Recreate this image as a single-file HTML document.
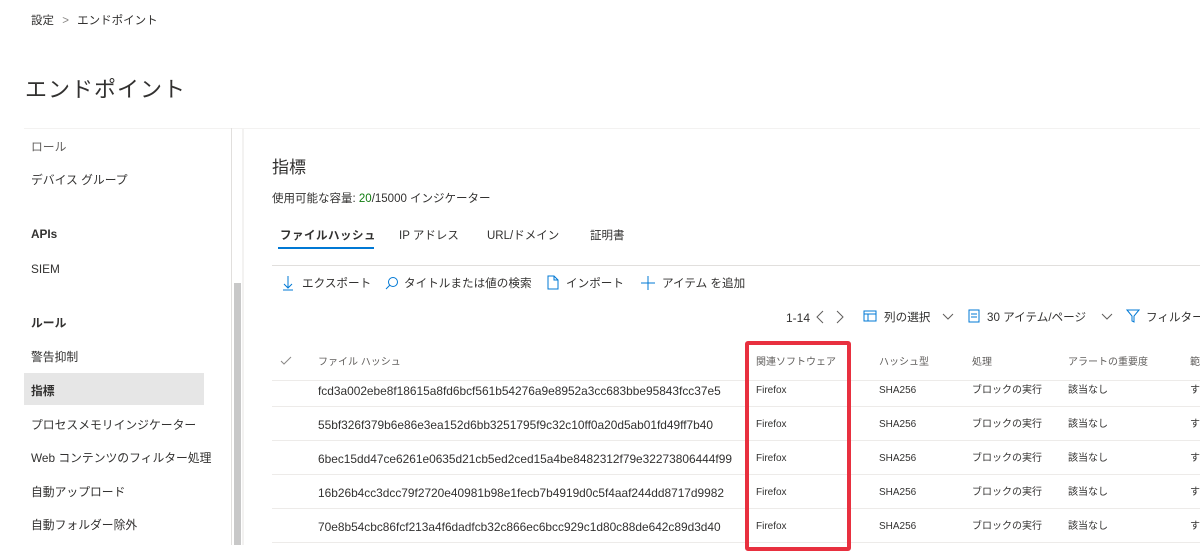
<!DOCTYPE html>
<html><head><meta charset="utf-8"><style>
*{margin:0;padding:0;box-sizing:border-box}
body{width:1200px;height:545px;overflow:hidden;background:#fff;font-family:"Liberation Sans","Noto Sans CJK JP",sans-serif;color:#323130;position:relative}
.a{position:absolute;white-space:nowrap;line-height:16px;padding-top:2px}
.s{font-size:11.8px;color:#323130;left:31px}
.c{font-size:10px;color:#323130}
.hx{font-size:11.9px}
.h{font-size:10px;color:#605e5c}
.ln{position:absolute;height:1px;background:#edebe9}
svg{position:absolute}
</style></head><body>
<div class="a" style="left:31px;top:11px;font-size:11.5px">設定 <span style="color:#8a8886;margin:0 5px">&gt;</span> エンドポイント</div>
<div class="a" style="left:25px;top:72px;font-size:22px;line-height:32px;letter-spacing:1px;color:#323130">エンドポイント</div>
<div class="ln" style="left:24px;top:128px;width:1176px;background:#f3f2f1"></div>
<div class="a s" style="top:137px;color:#605e5c">ロール</div>
<div class="a s" style="top:170px">デバイス グループ</div>
<div class="a s" style="top:224px;font-weight:bold">APIs</div>
<div class="a s" style="top:259px">SIEM</div>
<div class="a s" style="top:313px;font-weight:bold">ルール</div>
<div class="a" style="left:24px;top:373px;width:180px;height:32px;background:#e6e6e6"></div>
<div class="a s" style="top:347px">警告抑制</div>
<div class="a s" style="top:381px;font-weight:bold">指標</div>
<div class="a s" style="top:415px">プロセスメモリインジケーター</div>
<div class="a s" style="top:448px">Web コンテンツのフィルター処理</div>
<div class="a s" style="top:482px">自動アップロード</div>
<div class="a s" style="top:515px">自動フォルダー除外</div>
<div class="a" style="left:231px;top:128px;width:1px;height:417px;background:#e1dfdd"></div>
<div class="a" style="left:234px;top:283px;width:7px;height:262px;background:#c8c8c8"></div>
<div class="a" style="left:242px;top:128px;width:2px;height:417px;background:#f3f2f1"></div>

<div class="a" style="left:272px;top:154px;font-size:17px;line-height:24px">指標</div>
<div class="a" style="left:272px;top:189px;font-size:11.5px">使用可能な容量: <span style="color:#107c10">20</span>/15000 インジケーター</div>
<div class="a" style="left:280px;top:226px;font-size:11.5px;font-weight:bold;letter-spacing:0.5px">ファイルハッシュ</div>
<div class="a" style="left:278px;top:247px;width:96px;height:2px;background:#0078d4;padding:0"></div>
<div class="a" style="left:399px;top:226px;font-size:11.5px">IP アドレス</div>
<div class="a" style="left:487px;top:226px;font-size:11.5px">URL/ドメイン</div>
<div class="a" style="left:590px;top:226px;font-size:11.5px">証明書</div>
<div class="ln" style="left:272px;top:265px;width:928px;background:#e1dfdd"></div>

<svg style="left:281px;top:275px" width="14" height="16"><path d="M7 1v12M3 9l4 4 4-4M2 15h10" stroke="#0078d4" fill="none"/></svg>
<div class="a" style="left:302px;top:274px;font-size:11.6px">エクスポート</div>
<svg style="left:385px;top:276px" width="14" height="14"><circle cx="8" cy="6" r="4.5" stroke="#0078d4" fill="none"/><path d="M5 9l-4 4" stroke="#0078d4"/></svg>
<div class="a" style="left:404px;top:274px;font-size:11.6px">タイトルまたは値の検索</div>
<svg style="left:546px;top:275px" width="14" height="16"><path d="M2 1h6l4 4v9H2z" stroke="#0078d4" fill="none"/><path d="M8 1v4h4" stroke="#0078d4" fill="none"/></svg>
<div class="a" style="left:566px;top:274px;font-size:11.6px">インポート</div>
<svg style="left:640px;top:275px" width="16" height="16"><path d="M8 1v14M1 8h14" stroke="#0078d4"/></svg>
<div class="a" style="left:662px;top:274px;font-size:11.6px">アイテム を追加</div>

<div class="a" style="left:786px;top:308px;font-size:12px">1-14</div>
<svg style="left:814px;top:309px" width="30" height="16"><path d="M9 2L3 8l6 6M23 2l6 6-6 6" stroke="#605e5c" fill="none"/></svg>
<svg style="left:863px;top:309px" width="14" height="14"><rect x="1" y="2" width="12" height="10" stroke="#0078d4" fill="none"/><path d="M1 5h12M5 5v7" stroke="#0078d4"/></svg>
<div class="a" style="left:884px;top:308px;font-size:11.6px">列の選択</div>
<svg style="left:942px;top:311px" width="12" height="10"><path d="M1 3l5 5 5-5" stroke="#605e5c" fill="none"/></svg>
<svg style="left:968px;top:309px" width="12" height="14"><rect x="1" y="1" width="10" height="12" stroke="#0078d4" fill="none"/><path d="M3 5h6M3 8h6" stroke="#0078d4"/></svg>
<div class="a" style="left:987px;top:308px;font-size:11.6px">30 アイテム/ページ</div>
<svg style="left:1101px;top:311px" width="12" height="10"><path d="M1 3l5 5 5-5" stroke="#605e5c" fill="none"/></svg>
<svg style="left:1126px;top:309px" width="14" height="14"><path d="M1 1h12L8 7v6l-2-1V7z" stroke="#0078d4" fill="none"/></svg>
<div class="a" style="left:1146px;top:308px;font-size:11.6px">フィルター</div>

<svg style="left:280px;top:356px" width="12" height="10"><path d="M1 5l3 3 7-7" stroke="#8a8886" fill="none"/></svg>
<div class="a h" style="left:318px;top:353px">ファイル ハッシュ</div>
<div class="a h" style="left:756px;top:353px">関連ソフトウェア</div>
<div class="a h" style="left:879px;top:353px">ハッシュ型</div>
<div class="a h" style="left:972px;top:353px">処理</div>
<div class="a h" style="left:1068px;top:353px">アラートの重要度</div>
<div class="a h" style="left:1190px;top:353px">範</div>
<div class="ln" style="left:272px;top:380px;width:928px"></div>

<div class="a c hx" style="left:318px;top:381px">fcd3a002ebe8f18615a8fd6bcf561b54276a9e8952a3cc683bbe95843fcc37e5</div>
<div class="a c" style="left:756px;top:381px">Firefox</div><div class="a c" style="left:879px;top:381px">SHA256</div><div class="a c" style="left:972px;top:381px">ブロックの実行</div><div class="a c" style="left:1068px;top:381px">該当なし</div><div class="a c" style="left:1190px;top:381px">す</div>
<div class="ln" style="left:272px;top:406px;width:928px"></div>
<div class="a c hx" style="left:318px;top:415px">55bf326f379b6e86e3ea152d6bb3251795f9c32c10ff0a20d5ab01fd49ff7b40</div>
<div class="a c" style="left:756px;top:415px">Firefox</div><div class="a c" style="left:879px;top:415px">SHA256</div><div class="a c" style="left:972px;top:415px">ブロックの実行</div><div class="a c" style="left:1068px;top:415px">該当なし</div><div class="a c" style="left:1190px;top:415px">す</div>
<div class="ln" style="left:272px;top:440px;width:928px"></div>
<div class="a c hx" style="left:318px;top:449px">6bec15dd47ce6261e0635d21cb5ed2ced15a4be8482312f79e32273806444f99</div>
<div class="a c" style="left:756px;top:449px">Firefox</div><div class="a c" style="left:879px;top:449px">SHA256</div><div class="a c" style="left:972px;top:449px">ブロックの実行</div><div class="a c" style="left:1068px;top:449px">該当なし</div><div class="a c" style="left:1190px;top:449px">す</div>
<div class="ln" style="left:272px;top:474px;width:928px"></div>
<div class="a c hx" style="left:318px;top:483px">16b26b4cc3dcc79f2720e40981b98e1fecb7b4919d0c5f4aaf244dd8717d9982</div>
<div class="a c" style="left:756px;top:483px">Firefox</div><div class="a c" style="left:879px;top:483px">SHA256</div><div class="a c" style="left:972px;top:483px">ブロックの実行</div><div class="a c" style="left:1068px;top:483px">該当なし</div><div class="a c" style="left:1190px;top:483px">す</div>
<div class="ln" style="left:272px;top:508px;width:928px"></div>
<div class="a c hx" style="left:318px;top:517px">70e8b54cbc86fcf213a4f6dadfcb32c866ec6bcc929c1d80c88de642c89d3d40</div>
<div class="a c" style="left:756px;top:517px">Firefox</div><div class="a c" style="left:879px;top:517px">SHA256</div><div class="a c" style="left:972px;top:517px">ブロックの実行</div><div class="a c" style="left:1068px;top:517px">該当なし</div><div class="a c" style="left:1190px;top:517px">す</div>
<div class="ln" style="left:272px;top:542px;width:928px"></div>

<div class="a" style="left:745px;top:341px;width:106px;height:210px;border:4px solid #e8303f;border-radius:3px"></div>
</body></html>
